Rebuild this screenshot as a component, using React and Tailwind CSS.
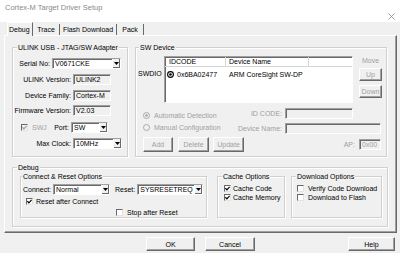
import React from "react";

function Sunken({ className = "", children }) {
  return (
    <div
      className={`border border-t-[#a0a0a0] border-l-[#a0a0a0] border-r-white border-b-white shadow-[inset_1px_1px_0_#696969] ${className}`}
    >
      {children}
    </div>
  );
}

function Arrow() {
  return (
    <span className="w-[8px] h-full shrink-0 flex items-center justify-center bg-[#f0f0f0] border-l border-l-white shadow-[inset_-1px_-1px_0_#696969]">
      <svg width="5" height="3" viewBox="0 0 5 3">
        <path d="M0 0h5L2.5 3z" fill="#000" />
      </svg>
    </span>
  );
}

function Combo({ w, text }) {
  return (
    <Sunken className={`flex h-[11px] bg-white shrink-0 ${w}`}>
      <span className="flex-1 pl-[2px] leading-[9px] overflow-hidden whitespace-nowrap">{text}</span>
      <Arrow />
    </Sunken>
  );
}

function Field({ w, text, gray }) {
  return (
    <Sunken className={`h-[11px] bg-[#f0f0f0] shrink-0 ${w}`}>
      <span className={`block pl-[2px] leading-[9px] whitespace-nowrap ${gray ? "text-[#a0a0a0]" : "text-black"}`}>
        {text}
      </span>
    </Sunken>
  );
}

function Btn({ children, className = "", disabled }) {
  return (
    <div
      className={`flex items-center justify-center bg-[#f0f0f0] border border-t-white border-l-white border-r-[#696969] border-b-[#696969] shadow-[inset_-1px_-1px_0_#a0a0a0] shrink-0 ${
        disabled ? "text-[#a0a0a0]" : "text-black"
      } ${className}`}
    >
      {children}
    </div>
  );
}

function Check({ checked, disabled }) {
  return (
    <span
      className={`inline-flex w-[7px] h-[7px] shrink-0 items-center justify-center border border-t-[#696969] border-l-[#696969] border-r-[#e3e3e3] border-b-[#e3e3e3] ${
        disabled ? "bg-[#f0f0f0]" : "bg-white"
      }`}
    >
      {checked && (
        <svg width="5" height="5" viewBox="0 0 5 5">
          <path
            d="M0.4 2.2 L1.9 3.8 L4.6 0.8"
            stroke={disabled ? "#a0a0a0" : "#000"}
            strokeWidth="1.2"
            fill="none"
          />
        </svg>
      )}
    </span>
  );
}

function Radio({ checked }) {
  return (
    <svg width="7" height="7" viewBox="0 0 7 7" className="shrink-0">
      <circle cx="3.5" cy="3.5" r="3" fill="#f0f0f0" stroke="#a0a0a0" strokeWidth="0.9" />
      {checked && <circle cx="3.5" cy="3.5" r="1.2" fill="#a0a0a0" />}
    </svg>
  );
}

function Group({ label, className = "", lm = "ml-[4px]", children }) {
  return (
    <div
      className={`flex flex-col border border-[#d0d0d0] shadow-[inset_1px_1px_0_white,1px_1px_0_white] shrink-0 ${className}`}
    >
      <span className={`-mt-[5px] ${lm} self-start px-[1px] bg-[#f0f0f0] leading-[9px] whitespace-nowrap`}>
        {label}
      </span>
      {children}
    </div>
  );
}

export default function App() {
  return (
    <div className="w-[400px] h-[253px] bg-[#f0f0f0] text-[7px] leading-[9px] text-black overflow-hidden flex flex-col font-['Liberation_Sans',Arial,sans-serif]">
      {/* Title bar */}
      <div className="h-[22px] bg-white flex items-start justify-between pl-[5px] pr-[5px] shrink-0">
        <span className="mt-[3px] text-[7.5px] text-[#8a8a8a]">Cortex-M Target Driver Setup</span>
        <svg width="7" height="7" viewBox="0 0 7 7" className="mt-[13px]">
          <path d="M0.5 0.5L6.5 6.5M6.5 0.5L0.5 6.5" stroke="#8a8a8a" strokeWidth="0.8" />
        </svg>
      </div>

      {/* Tabs */}
      <div className="flex items-end h-[13px] ml-[7px] shrink-0">
        <div className="relative z-10 w-[26px] h-[14px] -mb-[1px] bg-[#f0f0f0] border-l border-t border-l-white border-t-white border-r border-r-[#696969] flex items-center pl-[1px] pb-[1px]">
          Debug
        </div>
        <div className="w-[27px] h-[11px] border-r border-r-[#696969] flex items-center justify-center">Trace</div>
        <div className="w-[57px] h-[11px] border-r border-r-[#696969] flex items-center justify-center">
          Flash Download
        </div>
        <div className="w-[27px] h-[11px] border-r border-r-[#696969] flex items-center justify-center">Pack</div>
      </div>

      {/* Tab panel */}
      <div className="ml-[4px] w-[393px] h-[198px] shrink-0 border border-t-white border-l-white border-r-[#696969] border-b-[#696969] shadow-[inset_-1px_-1px_0_#a0a0a0] pt-[11px] pl-[7px] flex flex-col">
        <div className="flex gap-[7px] h-[110px]">
          {/* ULINK group */}
          <Group label="ULINK USB - JTAG/SW Adapter" className="w-[116px] h-[110px]">
            <div className="flex items-center mt-[6px]">
              <span className="w-[39px] pr-[2px] text-right whitespace-nowrap">Serial No:</span>
              <Combo w="w-[69px]" text="V0671CKE" />
            </div>
            <div className="flex items-center mt-[5px]">
              <span className="w-[60px] pr-[2px] text-right whitespace-nowrap">ULINK Version:</span>
              <Field w="w-[38px]" text="ULINK2" />
            </div>
            <div className="flex items-center mt-[5px]">
              <span className="w-[60px] pr-[2px] text-right whitespace-nowrap">Device Family:</span>
              <Field w="w-[38px]" text="Cortex-M" />
            </div>
            <div className="flex items-center mt-[4px]">
              <span className="w-[60px] pr-[2px] text-right whitespace-nowrap">Firmware Version:</span>
              <Field w="w-[38px]" text="V2.03" />
            </div>
            <div className="flex items-center mt-[6px] pl-[8px]">
              <Check checked disabled />
              <span className="ml-[4px] w-[19px] text-[#a0a0a0]">SWJ</span>
              <span className="w-[20px] pr-[2px] text-right">Port:</span>
              <Combo w="w-[37px]" text="SW" />
            </div>
            <div className="flex items-center mt-[5px]">
              <span className="w-[60px] pr-[2px] text-right whitespace-nowrap">Max Clock:</span>
              <Combo w="w-[49px]" text="10MHz" />
            </div>
          </Group>

          {/* SW Device group */}
          <Group label="SW Device" lm="ml-[3px]" className="w-[252px] h-[110px]">
            <div className="flex items-start mt-[4px]">
              <span className="ml-[2px] w-[26px] mt-[13px]">SWDIO</span>
              <Sunken className="w-[189px] h-[47px] bg-white flex flex-col shrink-0">
                <div className="flex h-[10px] border-b border-b-[#d5d5d5] shrink-0">
                  <div className="w-[61px] pl-[4px] border-r border-r-[#d5d5d5] leading-[9px]">IDCODE</div>
                  <div className="w-[83px] pl-[3px] border-r border-r-[#d5d5d5] leading-[9px] whitespace-nowrap">
                    Device Name
                  </div>
                  <div className="flex-1" />
                </div>
                <div className="flex items-center h-[10px] mt-[2px] pl-[2px]">
                  <svg width="7" height="7" viewBox="0 0 7 7" className="shrink-0">
                    <circle cx="3.5" cy="3.5" r="2.9" fill="none" stroke="#000" strokeWidth="1.1" />
                    <circle cx="3.5" cy="3.5" r="1.3" fill="#000" />
                  </svg>
                  <span className="ml-[3px] w-[52px] whitespace-nowrap">0x6BA02477</span>
                  <span className="whitespace-nowrap">ARM CoreSight SW-DP</span>
                </div>
              </Sunken>
              <div className="ml-[6px] w-[23px] flex flex-col items-center shrink-0">
                <span className="text-[#a0a0a0]">Move</span>
                <Btn disabled className="mt-[3px] w-[23px] h-[13px]">Up</Btn>
                <Btn disabled className="mt-[4px] w-[23px] h-[13px]">Down</Btn>
              </div>
            </div>

            <div className="flex mt-[5px]">
              <div className="flex flex-col pl-[7px] pt-[2px] gap-[2px] text-[#a0a0a0]">
                <div className="flex items-center h-[10px]">
                  <Radio checked />
                  <span className="ml-[4px] whitespace-nowrap">Automatic Detection</span>
                </div>
                <div className="flex items-center h-[10px]">
                  <Radio />
                  <span className="ml-[4px] whitespace-nowrap">Manual Configuration</span>
                </div>
              </div>
              <div className="ml-auto mr-[5px] grid grid-cols-[auto_96px] gap-x-[3px] gap-y-[4px] items-center text-[#a0a0a0]">
                <span className="text-right whitespace-nowrap">ID CODE:</span>
                <Field w="w-[68px]" text="" />
                <span className="text-right whitespace-nowrap">Device Name:</span>
                <Field w="w-[96px]" text="" />
              </div>
            </div>

            <div className="flex items-center mt-[3px] pl-[7px]">
              <Btn disabled className="w-[30px] h-[15px]">Add</Btn>
              <Btn disabled className="ml-[5px] w-[31px] h-[15px]">Delete</Btn>
              <Btn disabled className="ml-[4px] w-[31px] h-[15px]">Update</Btn>
              <span className="ml-auto text-[#a0a0a0]">AP:</span>
              <Field w="ml-[4px] mr-[5px] w-[22px]" text="0x00" gray />
            </div>
          </Group>
        </div>

        {/* Debug group */}
        <Group label="Debug" className="mt-[10px] w-[376px] h-[60px]">
          <div className="flex mt-[4px] pl-[7px]">
            <Group label="Connect & Reset Options" lm="ml-[1px]" className="w-[187px] h-[42px]">
              <div className="flex items-center mt-[3px] pl-[2px]">
                <span className="whitespace-nowrap">Connect:</span>
                <span className="ml-[2px]">
                  <Combo w="w-[57px]" text="Normal" />
                </span>
                <span className="ml-[5px] whitespace-nowrap">Reset:</span>
                <span className="ml-[2px]">
                  <Combo w="w-[66px]" text="SYSRESETREQ" />
                </span>
              </div>
              <div className="flex items-center h-[9px] mt-[2px] pl-[5px]">
                <Check checked />
                <span className="ml-[3px] whitespace-nowrap">Reset after Connect</span>
              </div>
              <div className="flex items-center h-[9px] mt-[2px] pl-[95px]">
                <Check />
                <span className="ml-[4px] whitespace-nowrap">Stop after Reset</span>
              </div>
            </Group>

            <Group label="Cache Options" className="ml-[10px] w-[68px] h-[42px]">
              <div className="flex items-center h-[9px] mt-[3px] pl-[6px]">
                <Check checked />
                <span className="ml-[2px] whitespace-nowrap">Cache Code</span>
              </div>
              <div className="flex items-center h-[9px] pl-[6px]">
                <Check checked />
                <span className="ml-[2px] whitespace-nowrap">Cache Memory</span>
              </div>
            </Group>

            <Group label="Download Options" className="ml-[6px] w-[91px] h-[42px]">
              <div className="flex items-center h-[9px] mt-[3px] pl-[5px]">
                <Check />
                <span className="ml-[4px] whitespace-nowrap">Verify Code Download</span>
              </div>
              <div className="flex items-center h-[9px] pl-[5px]">
                <Check />
                <span className="ml-[4px] whitespace-nowrap">Download to Flash</span>
              </div>
            </Group>
          </div>
        </Group>
      </div>

      {/* Bottom buttons */}
      <div className="flex mt-[4px] h-[14px] shrink-0">
        <Btn className="ml-[146px] w-[49px] h-[14px]">OK</Btn>
        <Btn className="ml-[10px] w-[50px] h-[14px]">Cancel</Btn>
        <Btn className="ml-auto mr-[5px] w-[47px] h-[14px]">Help</Btn>
      </div>
    </div>
  );
}
